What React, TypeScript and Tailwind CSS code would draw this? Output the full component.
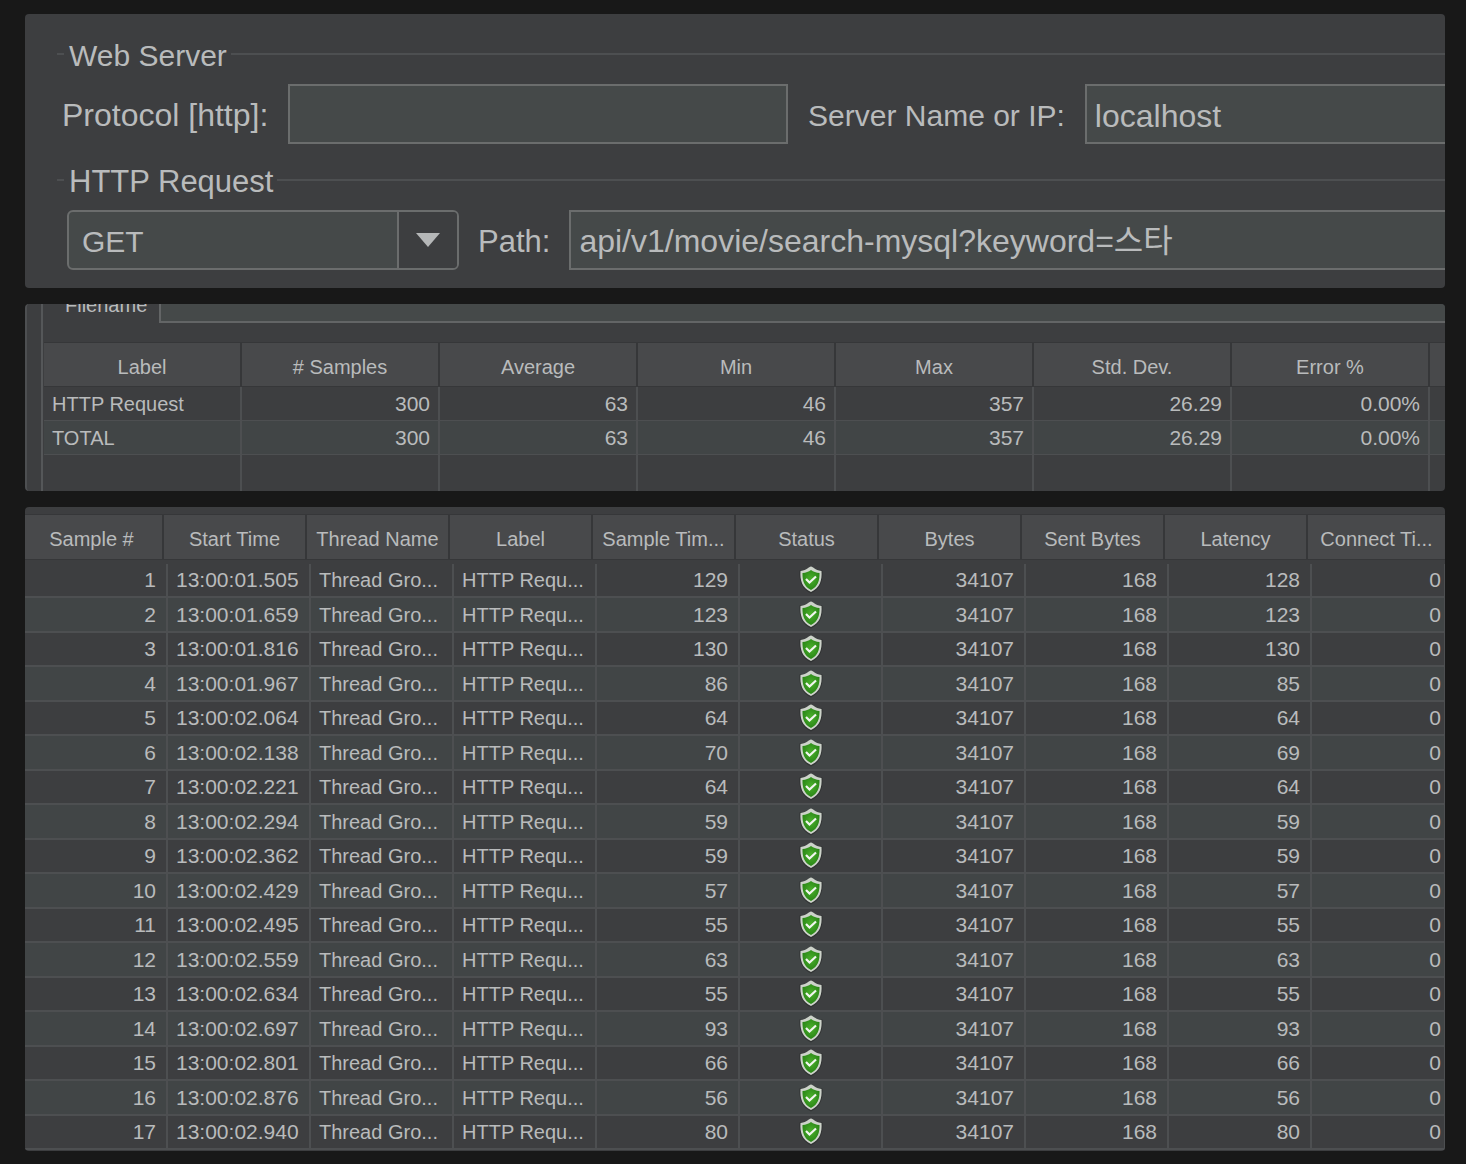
import clsx from 'clsx'

type Sample = {
  time: string
  elapsed: number
  latency: number
}

const SUMMARY_HEADERS = ['Label', '# Samples', 'Average', 'Min', 'Max', 'Std. Dev.', 'Error %', '']

const SUMMARY_ROWS = [
  ['HTTP Request', '300', '63', '46', '357', '26.29', '0.00%', ''],
  ['TOTAL', '300', '63', '46', '357', '26.29', '0.00%', ''],
  ['', '', '', '', '', '', '', ''],
]

const SAMPLE_HEADERS = [
  'Sample #',
  'Start Time',
  'Thread Name',
  'Label',
  'Sample Tim...',
  'Status',
  'Bytes',
  'Sent Bytes',
  'Latency',
  'Connect Ti...',
]

const SAMPLES: Sample[] = [
  { time: '13:00:01.505', elapsed: 129, latency: 128 },
  { time: '13:00:01.659', elapsed: 123, latency: 123 },
  { time: '13:00:01.816', elapsed: 130, latency: 130 },
  { time: '13:00:01.967', elapsed: 86, latency: 85 },
  { time: '13:00:02.064', elapsed: 64, latency: 64 },
  { time: '13:00:02.138', elapsed: 70, latency: 69 },
  { time: '13:00:02.221', elapsed: 64, latency: 64 },
  { time: '13:00:02.294', elapsed: 59, latency: 59 },
  { time: '13:00:02.362', elapsed: 59, latency: 59 },
  { time: '13:00:02.429', elapsed: 57, latency: 57 },
  { time: '13:00:02.495', elapsed: 55, latency: 55 },
  { time: '13:00:02.559', elapsed: 63, latency: 63 },
  { time: '13:00:02.634', elapsed: 55, latency: 55 },
  { time: '13:00:02.697', elapsed: 93, latency: 93 },
  { time: '13:00:02.801', elapsed: 66, latency: 66 },
  { time: '13:00:02.876', elapsed: 56, latency: 56 },
  { time: '13:00:02.940', elapsed: 80, latency: 80 },
]

const inputStyle = 'h-[60px] min-w-0 border-2 border-[#6b6d6d] bg-[#454949] px-2 text-[32px] outline-0'
const headCell = 'flex items-center justify-center border-y border-[#363739] bg-[#48494b] pt-1 font-normal whitespace-nowrap'
const textCell = 'flex items-center pl-2 whitespace-nowrap'
const numberCell = 'flex items-center justify-end text-[21px]'
const cellLine = 'border-r-2 border-[#4d4f51]'

const ShieldIcon: React.FC = () => (
  <svg width="24" height="28" viewBox="0 0 24 28" role="img" aria-label="Success">
    <defs>
      <radialGradient id="shield" cx="0.5" cy="0.45" r="0.6">
        <stop offset="0" stopColor="#4bb02c" />
        <stop offset="1" stopColor="#268214" />
      </radialGradient>
    </defs>
    <path
      d="M12 1 C9 3.500 5 4.500 0.500 4.500 C-0.200 14 2 23 12 27.500 C22 23 24.200 14 23.500 4.500 C19 4.500 15 3.500 12 1 Z"
      fill="#28292a"
      opacity="0.6"
    />
    <path
      d="M12 0.500 C9.500 0.800 8.500 4 1.500 5 C0.800 14 3 22 12 26 C21 22 23.200 14 22.500 5 C15.500 4 14.500 0.800 12 0.500 Z"
      fill="#cdd3ca"
    />
    <path
      d="M12 4 C9.500 5.800 7 6.800 3.500 7 C3.300 14.500 5 20.500 12 24 C19 20.500 20.700 14.500 20.500 7 C17 6.800 14.500 5.800 12 4 Z"
      fill="url(#shield)"
    />
    <path d="M7 13 L10.500 16.500 L17 10.500" fill="none" stroke="#f1f6ef" strokeWidth="2.200" />
  </svg>
)

const RequestPanel: React.FC = () => (
  <form className="overflow-hidden rounded bg-[#3d3e40] pt-5 pb-[18px] pl-8 text-[31px]">
    <fieldset className="min-w-0 border-t-2 border-[#4d4f51]">
      <legend className="ml-[7px] h-10 pr-1 pl-[5px] text-[30px] leading-[44px]">Web Server</legend>
      <div className="mt-[10px] flex items-center gap-5 pl-[5px]">
        <label htmlFor="protocol" className="pt-[2px] text-[32px] whitespace-nowrap">
          Protocol [http]:
        </label>
        <input id="protocol" className={clsx(inputStyle, 'flex-[502]')} />
        <label htmlFor="server" className="pt-1 text-[30px] whitespace-nowrap">
          Server Name or IP:
        </label>
        <input id="server" defaultValue="localhost" className={clsx(inputStyle, 'flex-[358] border-r-0 pt-1')} />
      </div>
    </fieldset>
    <fieldset className="mt-4 min-w-0 border-t-2 border-[#4d4f51]">
      <legend className="ml-[7px] h-10 pr-1 pl-[5px] leading-[44px]">HTTP Request</legend>
      <div className="mt-[10px] flex items-center gap-[19px] pl-[10px]">
        <div className="relative">
          <select
            aria-label="Method"
            className="block h-[60px] w-[392px] appearance-none rounded-md border-2 border-[#6b6d6d] bg-[#454949] px-[13px] pt-[3px] text-[30px] outline-0"
          >
            <option>GET</option>
          </select>
          <span className="pointer-events-none absolute inset-y-[2px] right-[2px] flex w-[60px] items-center justify-center rounded-r border-l-2 border-[#6b6d6d] bg-[#3d3e40]">
            <svg width="24" height="14" viewBox="0 0 24 14" aria-hidden="true">
              <path d="M0 0 H24 L12 14 Z" fill="#b5b7b8" />
            </svg>
          </span>
        </div>
        <label htmlFor="path" className="pt-[3px]">
          Path:
        </label>
        <input
          id="path"
          defaultValue="api/v1/movie/search-mysql?keyword=스타"
          className={clsx(inputStyle, 'flex-1 border-r-0 pb-1')}
        />
      </div>
    </fieldset>
  </form>
)

const SUMMARY_GRID = 'grid grid-cols-[repeat(7,minmax(0,1fr))_15px]'

const SummaryPanel: React.FC = () => (
  <section className="overflow-hidden rounded border-l-2 border-[#4d4f51] bg-[#3d3e40] pl-[14px]">
    <div className="border-l-2 border-[#555759] pl-px">
      <div className="flex h-[19px] items-end gap-3 overflow-hidden pl-[21px]">
        <label htmlFor="filename" className="mb-[6px] leading-6">
          Filename
        </label>
        <input
          id="filename"
          className="h-[34px] min-w-0 flex-1 border-b-2 border-l-2 border-[#636566] bg-[#454949] outline-0"
        />
      </div>
      <table className="mt-[19px] block">
        <thead className="block">
          <tr className={clsx(SUMMARY_GRID, 'h-[45px]')}>
            {SUMMARY_HEADERS.map((header, i) => (
              <th key={i} className={clsx(headCell, i < 7 && 'border-r-2')}>
                {header}
              </th>
            ))}
          </tr>
        </thead>
        <tbody className="block">
          {SUMMARY_ROWS.map((row, i) => (
            <tr
              key={i}
              className={clsx(
                SUMMARY_GRID,
                i === 2 ? 'h-9' : 'h-[34px] border-b border-[#4d4f51]',
                i === 1 && 'bg-[#414546]',
              )}
            >
              {row.map((value, j) => (
                <td key={j} className={clsx(j === 0 ? textCell : numberCell, 'pr-2', j < 7 && cellLine)}>
                  {value}
                </td>
              ))}
            </tr>
          ))}
        </tbody>
      </table>
    </div>
  </section>
)

const SamplesPanel: React.FC = () => {
  const number = clsx(numberCell, cellLine, 'pr-[10px]')
  const text = clsx(textCell, cellLine)

  return (
    <section className="overflow-hidden rounded bg-[#3d3e40] pt-[7px] pb-px">
      <table className="block">
        <thead className="block">
          <tr className="grid h-[46px] grid-cols-[139fr_repeat(8,143fr)_137fr]">
            {SAMPLE_HEADERS.map((header, i) => (
              <th key={header} className={clsx(headCell, i === 0 && 'pr-1', i < 9 && 'border-r-2')}>
                {header}
              </th>
            ))}
          </tr>
        </thead>
        <tbody className="mt-1 block">
          {SAMPLES.map((sample, i) => (
            <tr
              key={sample.time}
              className="grid h-[34px] grid-cols-[143fr_repeat(8,143fr)_133fr] border-b-2 border-[#4d4f51] even:h-[35px] even:bg-[#414546]"
            >
              <td className={number}>{i + 1}</td>
              <td className={clsx(text, 'text-[21px]')}>{sample.time}</td>
              <td className={text}>Thread Gro...</td>
              <td className={text}>HTTP Requ...</td>
              <td className={number}>{sample.elapsed}</td>
              <td className={clsx(cellLine, 'flex items-center justify-center')}>
                <ShieldIcon />
              </td>
              <td className={number}>34107</td>
              <td className={number}>168</td>
              <td className={number}>{sample.latency}</td>
              <td className={clsx(numberCell, 'border-r border-[#4d4f51] pr-[3px]')}>0</td>
            </tr>
          ))}
        </tbody>
      </table>
    </section>
  )
}

const App: React.FC = () => {
  return (
    <main className="flex min-h-screen flex-col gap-4 bg-[#181818] pt-[14px] pr-[21px] pb-3 pl-[25px] font-['Liberation_Sans','Noto_Sans_CJK_KR',sans-serif] text-[20px] leading-6 text-[#b9bbbc]">
      <RequestPanel />
      <SummaryPanel />
      <SamplesPanel />
    </main>
  )
}
export default App
